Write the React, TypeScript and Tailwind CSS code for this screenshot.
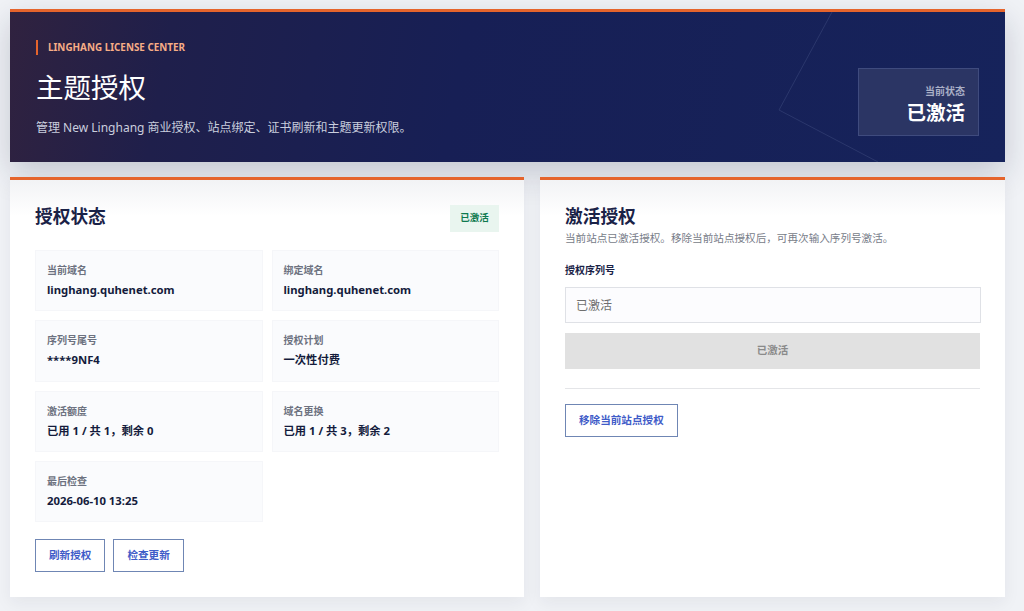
const fontStack = 'font-["Noto_Sans","Noto_Sans_CJK_SC",sans-serif]';

const fields = [
  { label: '当前域名', value: 'linghang.quhenet.com' },
  { label: '绑定域名', value: 'linghang.quhenet.com' },
  { label: '序列号尾号', value: '****9NF4' },
  { label: '授权计划', value: '一次性付费' },
  { label: '激活额度', value: '已用 1 / 共 1，剩余 0' },
  { label: '域名更换', value: '已用 1 / 共 3，剩余 2' },
  { label: '最后检查', value: '2026-06-10 13:25' },
];

function OutlineButton({ children }: { children: string }) {
  return (
    <button className="h-[33px] border border-[#6f86b4] bg-white px-[13px] text-[10.6px] font-bold text-[#3f5cc8]">
      {children}
    </button>
  );
}

export default function App() {
  return (
    <div className={`min-h-[611px] overflow-hidden bg-[#f0f2f6] pb-[14px] pl-[10px] pr-[19px] pt-[9px] ${fontStack}`}>
      <header className="relative flex h-[153px] items-start justify-between overflow-hidden border-t-[3px] border-[#e5642c] bg-[linear-gradient(100deg,#30223f_0%,#1f1f4b_16%,#171f55_45%,#16235b_100%)] px-[26px] shadow-[0_12px_30px_rgba(20,30,60,0.2)]">
        <svg className="absolute left-[760px] top-0 h-[150px] w-[130px]" viewBox="0 0 130 150" fill="none">
          <path d="M62 0 L9 98 L108 150" stroke="#2b376c" strokeWidth="1" />
        </svg>
        <div className="relative">
          <div className="mt-[28px] border-l-2 border-[#e5642c] pl-[10px] text-[9.9px] font-bold leading-[15px] text-[#f7ad86]">
            LINGHANG LICENSE CENTER
          </div>
          <h1 className="mt-[13px] text-[27.5px] font-normal leading-[40px] text-white">主题授权</h1>
          <p className="mt-[11px] text-[12px] leading-[18px] text-[#c9cede]">
            管理 New Linghang 商业授权、站点绑定、证书刷新和主题更新权限。
          </p>
        </div>
        <div className="relative mt-[56px] flex h-[68px] w-[121px] flex-col items-end border border-[#3f4b7e] bg-[#2b3564] pr-[13px] pt-[14px]">
          <div className="text-[10px] font-bold leading-[16px] text-[#a9afc6]">当前状态</div>
          <div className="mt-[1px] text-[19.5px] font-bold leading-[26px] text-white">已激活</div>
        </div>
      </header>

      <main className="relative mt-[15px] grid grid-cols-[514px_465px] gap-4">
        <section className="h-[420px] border-t-[3px] border-[#e5642c] bg-[linear-gradient(#f2f3f5,#ffffff_36px)] px-[25px] pt-[23px] shadow-[0_6px_16px_rgba(30,35,50,0.06)]">
          <div className="flex items-start justify-between">
            <h2 className="text-[17.7px] font-bold leading-[26px] text-[#1a2247]">授权状态</h2>
            <span className="mt-[2px] flex h-[27px] w-[49px] items-center justify-center bg-[#e9f5ef] text-[9.5px] font-bold text-[#0f7a4f]">
              已激活
            </span>
          </div>
          <div className="mt-[18px] grid grid-cols-2 gap-[9px]">
            {fields.map((field) => (
              <div key={field.label} className="h-[61.33px] border border-[#f5f6f9] bg-[#fafbfd] px-[11px] pt-[12px]">
                <div className="text-[10px] font-semibold leading-[15px] text-[#6d7280]">{field.label}</div>
                <div className="mt-[4px] text-[11.3px] font-bold leading-[16px] text-[#141b3c]">{field.value}</div>
              </div>
            ))}
          </div>
          <div className="mt-[17px] flex gap-2">
            <OutlineButton>刷新授权</OutlineButton>
            <OutlineButton>检查更新</OutlineButton>
          </div>
        </section>

        <section className="h-[420px] border-t-[3px] border-[#e5642c] bg-[linear-gradient(#f2f3f5,#ffffff_36px)] px-[25px] pt-[23px] shadow-[0_6px_16px_rgba(30,35,50,0.06)]">
          <h2 className="text-[17.7px] font-bold leading-[26px] text-[#1a2247]">激活授权</h2>
          <p className="mt-[2px] text-[10.6px] leading-[15px] text-[#777c88]">
            当前站点已激活授权。移除当前站点授权后，可再次输入序列号激活。
          </p>
          <label className="mt-[16px] block text-[10px] font-bold leading-[16px] text-[#1a2247]">授权序列号</label>
          <input
            readOnly
            value="已激活"
            className="mt-[9px] h-[36px] w-[416px] border border-[#dfe1e6] bg-[#fcfcfe] px-[10px] text-[12px] text-[#6f6f6f]"
          />
          <div className="mt-[10px] flex h-[36px] w-[415px] items-center justify-center bg-[#e1e1e1] text-[10.5px] font-semibold text-[#8a8a8a]">
            已激活
          </div>
          <div className="mt-[19px] h-px w-[415px] bg-[#e4e5e8]" />
          <div className="mt-[15px]">
            <OutlineButton>移除当前站点授权</OutlineButton>
          </div>
        </section>
      </main>
    </div>
  );
}
